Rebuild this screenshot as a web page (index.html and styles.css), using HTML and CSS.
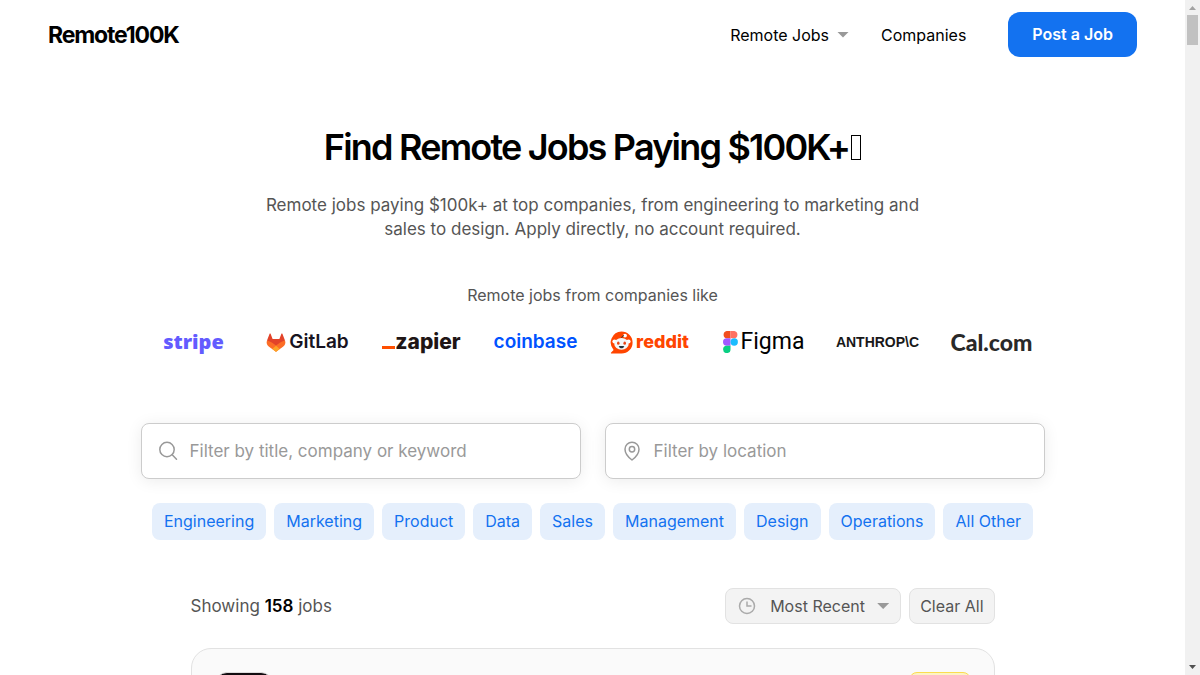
FILE: index.html
```html
<!DOCTYPE html>
<html lang="en">
<head>
<meta charset="utf-8">
<meta name="viewport" content="width=device-width, initial-scale=1">
<title>Remote100K</title>
<link rel="stylesheet" href="styles.css">
</head>
<body class="window">
<div class="page">
  <header class="topbar">
    <a class="brand" href="#">Remote100K</a>
    <nav class="nav">
      <button class="nav-item" type="button">Remote Jobs <span class="caret"></span></button>
      <a class="nav-item" href="#">Companies</a>
      <a class="post" href="#">Post a Job</a>
    </nav>
  </header>
  <main>
    <section class="hero">
      <h1 class="title">Find Remote Jobs Paying $100K+<span class="title-box"></span></h1>
      <p class="lead">Remote jobs paying $100k+ at top companies, from engineering to marketing and sales to design. Apply directly, no account required.</p>
      <p class="from">Remote jobs from companies like</p>
      <ul class="logos">
        <li class="logo stripe">stripe</li>
        <li class="logo gitlab">
          <svg width="20" height="19" viewBox="0 0 20 19" aria-hidden="true"><path fill="#e24329" d="M1 7.500 3.600.8c.2-.5.8-.5 1 0L6.600 6h6.800l2-5.200c.2-.5.8-.5 1 0L19 7.500 10 18.500z"/><path fill="#fc6d26" d="M1 7.500c-1 2.500 0 4.700 2 6.200l7 5.100 7-5.100c2-1.500 3-3.700 2-6.200-2 .4-3.700 1.200-5.200 2.300L10 12.600 6.200 9.800C4.700 8.700 3 7.900 1 7.500z"/><path fill="#fca326" d="m6.300 15.900 3.200 2.600c.4.300.7.300 1 0l3.200-2.600L10 12.800z"/></svg>
          <span>GitLab</span>
        </li>
        <li class="logo zapier"><span class="zapier-bar"></span>zapier</li>
        <li class="logo coinbase">coinbase</li>
        <li class="logo reddit">
          <svg width="23" height="23" viewBox="0 0 23 23" aria-hidden="true"><path fill="#ff4500" d="M11.500.4a11.100 11.100 0 1 1 0 22.200H1.600c-.7 0-1-.7-.5-1.200l2.500-2.500A11.100 11.100 0 0 1 11.500.4z"/><circle cx="4.500" cy="10.500" r="2.100" fill="#fff"/><circle cx="18.500" cy="10.500" r="2.100" fill="#fff"/><circle cx="15" cy="4.600" r="1.900" fill="#fff"/><path d="M11.600 7.500c0-1.500 1-2.800 2.400-2.900" stroke="#233" fill="none"/><ellipse cx="11.500" cy="12.900" rx="7.200" ry="5.900" fill="#f3f8fa"/><ellipse cx="8.300" cy="12.200" rx="1.300" ry="1.600" fill="#e8471a"/><ellipse cx="14.700" cy="12.200" rx="1.300" ry="1.600" fill="#e8471a"/><path d="M8.700 15.300c1.800-.4 3.800-.4 5.600 0-.5 1.400-1.600 2-2.800 2s-2.300-.6-2.800-2z" fill="#24303a"/></svg>
          <span>reddit</span>
        </li>
        <li class="logo figma">
          <svg width="15" height="22" viewBox="0 0 15 22" aria-hidden="true"><path fill="#f24e1e" d="M3.700 0h3.800v7.300H3.700a3.700 3.700 0 0 1 0-7.300z"/><path fill="#ff7262" d="M7.500 0h3.800a3.700 3.700 0 0 1 0 7.300H7.500z"/><path fill="#a259ff" d="M3.700 7.300h3.800v7.400H3.700a3.700 3.700 0 0 1 0-7.400z"/><circle cx="11.200" cy="11" r="3.700" fill="#1abcfe"/><path fill="#0acf83" d="M3.700 14.700h3.800v3.600a3.700 3.700 0 1 1-3.800-3.600z"/></svg>
          <span>Figma</span>
        </li>
        <li class="logo anthropic">ANTHROP\C</li>
        <li class="logo cal">Cal.com</li>
      </ul>
    </section>
    <form class="filters">
      <label class="field">
        <svg width="20" height="20" viewBox="0 0 20 20" fill="none" stroke="#999" stroke-width="1.500" stroke-linecap="round" aria-hidden="true"><circle cx="9" cy="8.500" r="7.200"/><path d="m14.200 13.700 4.300 4.500"/></svg>
        <input class="field-input" type="text" aria-label="Title, company or keyword" placeholder="Filter by title, company or keyword">
      </label>
      <label class="field">
        <svg width="20" height="20" viewBox="0 0 20 20" fill="none" stroke="#999" stroke-width="1.500" stroke-linejoin="round" aria-hidden="true"><path d="M10 19c-2-1.500-7-5.900-7-10.800a7 7 0 0 1 14 0C17 13.100 12 17.500 10 19z"/><circle cx="10" cy="8.200" r="2.700"/></svg>
        <input class="field-input" type="text" aria-label="Location" placeholder="Filter by location">
      </label>
    </form>
    <nav class="chips" aria-label="Categories">
      <a class="chip" href="#">Engineering</a>
      <a class="chip" href="#">Marketing</a>
      <a class="chip" href="#">Product</a>
      <a class="chip" href="#">Data</a>
      <a class="chip" href="#">Sales</a>
      <a class="chip" href="#">Management</a>
      <a class="chip" href="#">Design</a>
      <a class="chip" href="#">Operations</a>
      <a class="chip" href="#">All Other</a>
    </nav>
    <section class="results">
      <div class="results-head">
        <p class="count">Showing <strong>158</strong> jobs</p>
        <div class="tools">
          <label class="sort">
            <svg width="18" height="18" viewBox="0 0 18 18" fill="none" stroke="#aaa" stroke-width="1.500" aria-hidden="true"><circle cx="9" cy="9" r="7.500"/><path d="M9 4.500V9h4.500"/></svg>
            <select class="sort-select" aria-label="Sort jobs"><option>Most Recent</option></select>
            <span class="caret"></span>
          </label>
          <button class="clear" type="button">Clear All</button>
        </div>
      </div>
      <article class="card">
        <div class="card-logo"></div>
        <div class="card-badge"></div>
      </article>
    </section>
  </main>
</div>
<div class="scrollbar" aria-hidden="true">
  <svg width="15" height="15" viewBox="0 0 15 15"><path fill="#a3a3a3" d="M4 10 7.500 6 11 10z"/></svg>
  <div class="thumb"></div>
  <svg class="down" width="15" height="15" viewBox="0 0 15 15"><path fill="#505050" d="M4 5h7L7.500 9z"/></svg>
</div>
</body>
</html>
```
FILE: styles.css
```css
* { box-sizing: border-box; }
.window {
  margin: 0;
  display: grid;
  grid-template-columns: minmax(0, 1fr) 15px;
  height: 100vh;
  overflow: hidden;
  background: #fff;
  color: #000;
  font-family: Inter, "Liberation Sans", sans-serif;
  font-size: 16px;
}
.page { overflow: hidden; }
a { color: inherit; text-decoration: none; }
button, input, select { font: inherit; color: inherit; }
.topbar {
  display: flex;
  align-items: center;
  justify-content: space-between;
  padding: 12px 48px;
}
.brand { font-size: 23px; line-height: 28px; font-weight: 700; letter-spacing: -0.05em; }
.nav { display: flex; align-items: center; }
.nav-item {
  display: flex;
  align-items: center;
  gap: 8px;
  padding: 0;
  border: 0;
  background: none;
  margin-right: 32px;
  line-height: 20px;
}
.caret {
  width: 12px;
  height: 6px;
  background: #999;
  clip-path: polygon(0 0, 100% 0, 50% 100%);
}
.post {
  margin-left: 10px;
  padding: 12px 24px;
  border-radius: 12px;
  background: #1372f0;
  color: #fff;
  font-weight: 600;
  line-height: 21px;
}
.hero { text-align: center; padding-top: 56px; }
.title {
  margin: 0;
  font-size: 36px;
  line-height: 44px;
  font-weight: 600;
  letter-spacing: -0.05em;
}
.title-box {
  display: inline-block;
  width: 10px;
  height: 25px;
  margin-left: 2px;
  border: 1px solid #000;
}
.lead {
  margin: 24px auto 0;
  max-width: 680px;
  font-size: 17px;
  line-height: 24px;
  color: #555;
}
.from { margin: 44px 0 0; line-height: 20px; color: #555; }
.logos {
  display: grid;
  grid-template-columns: repeat(8, 1fr);
  max-width: 912px;
  margin: 17px auto 0;
  padding: 0;
  list-style: none;
}
.logo {
  display: flex;
  align-items: center;
  justify-content: center;
  height: 40px;
  line-height: 24px;
}
.stripe { font: 800 20px/24px "Open Sans", sans-serif; color: #635bff; }
.gitlab { gap: 3px; font-size: 19px; font-weight: 600; color: #171321; }
.zapier { font-size: 21px; font-weight: 800; color: #201515; }
.zapier-bar { width: 13px; height: 3px; margin-top: 11px; background: #ff4f00; }
.coinbase { font-size: 19px; font-weight: 600; color: #0052ff; }
.reddit { gap: 3px; font-size: 18px; font-weight: 800; color: #ff4500; }
.figma { gap: 3px; font: 400 23px/24px Roboto, sans-serif; }
.anthropic { font: 700 14px/24px "Liberation Sans", sans-serif; color: #181818; }
.cal { font: 900 23px/24px Lato, sans-serif; color: #292929; }
.filters {
  display: grid;
  grid-template-columns: 1fr 1fr;
  gap: 24px;
  max-width: 904px;
  margin: 61px auto 0;
}
.field {
  display: flex;
  align-items: center;
  gap: 12px;
  height: 56px;
  padding: 0 16px;
  border: 1px solid #ccc;
  border-radius: 8px;
  background: #fff;
  box-shadow: 0 2px 16px rgba(0, 0, 0, 0.08);
}
.field-input {
  flex: 1;
  min-width: 0;
  padding: 0;
  border: 0;
  outline: 0;
  background: none;
  font-size: 17px;
}
.field-input::placeholder { color: #999; }
.chips {
  display: flex;
  flex-wrap: wrap;
  justify-content: center;
  gap: 8px;
  margin-top: 24px;
}
.chip {
  padding: 8px 12px;
  border-radius: 8px;
  background: #e5effc;
  color: #1372f0;
  line-height: 21px;
}
.results { max-width: 804px; margin: 48px auto 0; }
.results-head {
  display: flex;
  align-items: center;
  justify-content: space-between;
}
.count { margin: 0; font-size: 17px; color: #555; }
.count strong { font-weight: 600; color: #000; }
.tools { display: flex; gap: 8px; }
.sort, .clear {
  display: flex;
  align-items: center;
  height: 36px;
  padding: 0 10px;
  border: 1px solid #e2e2e2;
  border-radius: 8px;
  background: #f3f3f3;
  color: #555;
}
.sort { padding: 0 11px 0 12px; }
.sort-select {
  appearance: none;
  margin: 0 12px 0 14px;
  padding: 0;
  border: 0;
  background: none;
}
.card {
  display: flex;
  justify-content: space-between;
  margin-top: 24px;
  padding: 23px;
  border: 1px solid #e2e2e2;
  border-radius: 20px;
  background: #fafafa;
}
.card-logo { width: 58px; height: 56px; border: 1px solid #ddd; border-radius: 12px; background: #120c10; }
.card-badge { width: 62px; height: 28px; border: 1px solid #fbdc50; border-radius: 8px; background: #fdf3c4; }
.scrollbar { display: flex; flex-direction: column; background: #f1f1f1; }
.thumb { width: 11px; height: 30px; margin: 0 2px; background: #c1c1c1; }
.down { margin-top: auto; }
```
